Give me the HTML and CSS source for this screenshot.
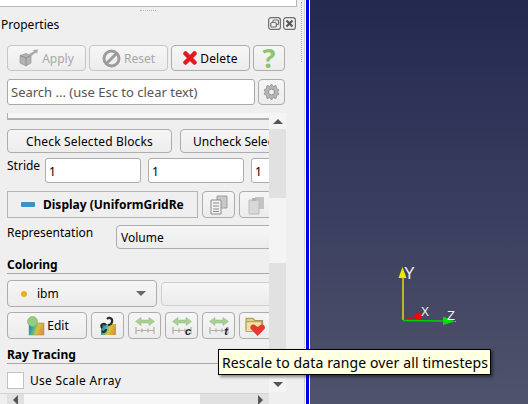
FILE: index.html
```html
<!DOCTYPE html>
<html>
    <head>
        <title>Properties</title>
        <link rel="stylesheet" href="styles.css">
    </head>
    <body>
        <svg class="defs" width="0" height="0">
            <defs>
                <linearGradient id="mapa" x1="0" y1="0" x2="1" y2="0.3">
                    <stop offset="0" stop-color="#2a5fc4"/>
                    <stop offset="0.35" stop-color="#2fb0a8"/>
                    <stop offset="0.65" stop-color="#d8c23c"/>
                    <stop offset="1" stop-color="#d9973a"/>
                </linearGradient>
                <symbol id="flecha" viewBox="0 0 20 9">
                    <path d="M.5 4.500 6 .5V3H14V.5L19.500 4.500 14 8.500V6H6V8.500Z" fill="#a8d092" stroke="#93b885" stroke-width=".5"/>
                </symbol>
                <symbol id="regla" viewBox="0 0 20 9">
                    <path d="M1 1V8M7 2.500V6.500M13 2.500V6.500M19 1V8M1 4.500H19" fill="none" stroke="#b0b0a6" stroke-width="1.200"/>
                </symbol>
            </defs>
        </svg>

        <section class="dock">
            <div class="top_panel"></div>
            <div class="grip"></div>
            <div class="grip_side"></div>

            <div class="title_row">
                <span class="title">Properties</span>
                <span class="title_icons">
                    <svg width="13" height="13" viewBox="0 0 13 13"><rect x=".6" y=".6" width="11.800" height="11.800" rx="2.500" fill="none" stroke="#6f6f6f" stroke-width="1.200"/><rect x="5" y="3" width="5.500" height="4.500" rx="1" fill="none" stroke="#6f6f6f" stroke-width="1.200"/><rect x="2.800" y="5.500" width="5.500" height="4.500" rx="1" fill="#efefef" stroke="#6f6f6f" stroke-width="1.200"/></svg>
                    <svg width="13" height="13" viewBox="0 0 13 13"><rect x=".6" y=".6" width="11.800" height="11.800" rx="2.500" fill="none" stroke="#6f6f6f" stroke-width="1.200"/><path d="M3.500 3.500 9.500 9.500M9.500 3.500 3.500 9.500" stroke="#555" stroke-width="2.200"/></svg>
                </span>
            </div>

            <div class="action_row">
                <button class="btn wide off">
                    <svg width="20" height="18" viewBox="0 0 20 18"><path d="M1 6.500 7 4.500 12 6.500V14L7 17 1 14Z" fill="#b3b3b3" stroke="#8e8e8e" stroke-width=".6"/><path d="M7 9V16.500M1 6.500 7 9 12 6.500" fill="none" stroke="#8e8e8e"/><path d="M10 5 15 2.500 14 1 19 .5 18 5 17 3.500 12 7Z" fill="#a8a8a8"/></svg>
                    Apply
                </button>
                <button class="btn wide off">
                    <svg class="reset_icon" width="19" height="19" viewBox="0 0 19 19"><circle cx="9.500" cy="9.500" r="7.500" fill="none" stroke="#9c9c9c" stroke-width="3"/><path d="M4.500 14.500 14.500 4.500" stroke="#9c9c9c" stroke-width="3"/></svg>
                    Reset
                </button>
                <button class="btn wide">
                    <svg width="14" height="14" viewBox="0 0 14 14"><path d="M2.500 2.500 11.500 11.500M11.500 2.500 2.500 11.500" stroke="#e5171f" stroke-width="4.500" stroke-linecap="round"/></svg>
                    <span class="wider">Delete</span>
                </button>
                <button class="btn help">?</button>
            </div>

            <div class="search_row">
                <div class="search">Search ... (use Esc to clear text)</div>
                <button class="btn gear">
                    <svg width="17" height="18" viewBox="0 0 17 18"><path d="M8.500 1 10 3.500 13 2.500 13.500 5.500 16 7 14.500 9 16 11 13.500 12.500 13 15.500 10 14.500 8.500 17 7 14.500 4 15.500 3.500 12.500 1 11 2.500 9 1 7 3.500 5.500 4 2.500 7 3.500Z" fill="#b5b5b5" stroke="#9a9a9a"/><circle cx="8.500" cy="9" r="3" fill="#efefef" stroke="#8f8f8f"/></svg>
                </button>
            </div>

            <div class="scroll_row">
                <div class="content">
                    <div class="cut_box"></div>

                    <div class="row check_row">
                        <button class="btn check_one wider">Check Selected Blocks</button>
                        <button class="btn check_two">Uncheck Selected Blocks</button>
                    </div>

                    <div class="row stride_row">
                        <span class="stride_label">Stride</span>
                        <div class="field">1</div>
                        <div class="field">1</div>
                        <div class="field">1</div>
                    </div>

                    <div class="row display_row">
                        <div class="display_tab"><span class="display_mark"></span><span class="display_text">Display (UniformGridRe</span></div>
                        <button class="btn small">
                            <svg width="20" height="20" viewBox="0 0 20 20"><path d="M8 1H18V13H8Z" fill="#c9c9c9" stroke="#9d9d9d"/><path d="M2 5H12V19H2Z" fill="#f3f3f3" stroke="#8c8c8c"/><path d="M4 8H10M4 11H10M4 14H10M4 16.500H10" stroke="#8c8c8c"/></svg>
                        </button>
                        <button class="btn small">
                            <svg width="20" height="20" viewBox="0 0 20 20"><path d="M9 2H18V14H9Z" fill="#c4c4c4"/><path d="M3 5H13V19H3Z" fill="#d8d8d8" stroke="#bcbcbc"/><path d="M6 3H10V6H6Z" fill="#b5b5b5"/></svg>
                        </button>
                    </div>

                    <div class="row repr_row">
                        <span class="repr_label">Representation</span>
                        <div class="combo repr_combo">Volume</div>
                    </div>

                    <h3 class="section">Coloring</h3>

                    <div class="row color_row">
                        <div class="combo ibm_combo"><span class="dot"></span><span>ibm</span><span class="caret"></span></div>
                        <div class="combo empty_combo"></div>
                    </div>

                    <div class="row tools_row">
                        <button class="btn edit">
                            <svg width="18" height="20" viewBox="0 0 18 20"><rect x="2" y="7" width="15" height="12" fill="url(#mapa)"/><rect x="2" y="7" width="15" height="12" fill="none" stroke="#8c8c6a" stroke-width=".5"/><circle cx="5.500" cy="5.500" r="5" fill="#95cd80" stroke="#86b277" stroke-width=".6"/></svg>
                            Edit
                        </button>
                        <button class="btn small">
                            <svg width="18" height="20" viewBox="0 0 18 20"><rect x="2" y="8" width="15" height="11" fill="url(#mapa)"/><path d="M3 12C1 8 5 7 7 9M8 3C10 1 14 2 13 6 12.500 8 11 9 9 9M3 15C5 17 7 15 7 13" fill="none" stroke="#2b2b2b" stroke-width="2.200"/></svg>
                        </button>
                        <button class="btn small ruler">
                            <svg width="20" height="9" viewBox="0 0 20 9"><use href="#flecha"/></svg>
                            <svg width="20" height="9" viewBox="0 0 20 9"><use href="#regla"/></svg>
                        </button>
                        <button class="btn small ruler">
                            <svg width="20" height="9" viewBox="0 0 20 9"><use href="#flecha"/></svg>
                            <svg width="20" height="9" viewBox="0 0 20 9"><use href="#regla"/></svg>
                            <i class="ruler_letter">c</i>
                        </button>
                        <button class="btn small ruler">
                            <svg width="20" height="9" viewBox="0 0 20 9"><use href="#flecha"/></svg>
                            <svg width="20" height="9" viewBox="0 0 20 9"><use href="#regla"/></svg>
                            <i class="ruler_letter">t</i>
                        </button>
                        <button class="btn small folder">
                            <svg width="22" height="22" viewBox="0 0 20 20"><path d="M1 3H7L9 5H16V13H1Z" fill="#e6cf7c" stroke="#a8955a"/><path d="M1 6H15V15H1Z" fill="#f2e2a0" stroke="#b9a566"/><path d="M11.500 19 5.500 13C3.500 10.500 6.500 7.500 9 9L11.500 11 14 9C16.500 7.500 19.500 10.500 17.500 13Z" fill="#e23b32"/></svg>
                        </button>
                    </div>

                    <h3 class="section ray">Ray Tracing</h3>

                    <div class="row scale_row">
                        <span class="checkbox"></span>
                        <span class="wider_more">Use Scale Array</span>
                    </div>
                </div>

                <div class="vscroll">
                    <div class="arrow"><span class="tri_up"></span></div>
                    <div class="vtrack_a"></div>
                    <div class="vthumb"></div>
                    <div class="vtrack_b"></div>
                    <div class="arrow"><span class="tri_down"></span></div>
                </div>
            </div>

            <div class="hscroll">
                <div class="harrow"><span class="tri_left"></span></div>
                <div class="hthumb"></div>
                <div class="htrack"></div>
                <div class="harrow"><span class="tri_right"></span></div>
            </div>
        </section>

        <div class="gap"></div>

        <section class="view">
            <svg class="axes" width="70" height="70" viewBox="395 260 70 70">
                <path d="M403 320V276" stroke="#e0e000" stroke-width="1.500"/>
                <path d="M402.500 267 406.500 278H398.500Z" fill="#e8e800"/>
                <path d="M404 320 418 316" stroke="#f00000" stroke-width="1.300"/>
                <circle cx="418" cy="316" r="3.500" fill="#ff0000"/>
                <path d="M403 320.500 445 321" stroke="#00d000" stroke-width="1.300"/>
                <path d="M443 316.500 455 321.500 443 325Z" fill="#00e000"/>
                <path d="M455 321.500H456" stroke="#aaa"/>
                <text class="axis_text" x="404" y="279" font-size="16">Y</text>
                <text class="axis_text" x="421" y="316" font-size="12">X</text>
                <text class="axis_text" x="447" y="320" font-size="13">Z</text>
            </svg>
        </section>

        <div class="tooltip">Rescale to data range over all timesteps</div>
    </body>
</html>
```

FILE: styles.css
```css
*{
    box-sizing: border-box;
}
html, body{
    margin: 0;
    height: 404px;
    overflow: hidden;
}
body{
    display: flex;
    width: 528px;
    font-family: "Noto Sans", sans-serif;
    font-size: 12px;
    color: #000;
    background: #efefef;
}
.defs{
    position: absolute;
}
.dock{
    position: relative;
    width: 304px;
    height: 404px;
    flex-shrink: 0;
    background: #efefef;
}
.gap{
    width: 2px;
    background: #fff;
    border-left: 1px solid #d0d0d0;
}
.view{
    flex: 1;
    position: relative;
    border-left: 3px solid #0000f0;
    box-shadow: inset 1px 0 0 #fff;
    background: linear-gradient(#232850, #4f536c);
}
.axes{
    position: absolute;
    left: 86px;
    top: 260px;
}
.axis_text{
    font-family: "Liberation Sans", sans-serif;
    fill: #f0f0f0;
}
.top_panel{
    height: 7px;
    width: 297px;
    background: #fff;
    border-right: 1px solid #b5b5b5;
    border-bottom: 1px solid #b5b5b5;
}
.grip{
    width: 16px;
    height: 1px;
    margin: 3px 0 0 140px;
    border-top: 1px dotted #b8b8b8;
}
.grip_side{
    position: absolute;
    left: 301px;
    top: 2px;
    width: 1px;
    height: 60px;
    border-left: 1px dotted #b0b0b0;
}
.title_row{
    display: flex;
    justify-content: space-between;
    align-items: flex-start;
    width: 296px;
    height: 20px;
    margin-top: 4px;
    padding-left: 1px;
    line-height: 19px;
}
.title_icons{
    display: flex;
    gap: 2px;
    margin-top: 2px;
}
.title_icons svg{
    display: block;
}
.btn{
    display: flex;
    align-items: center;
    justify-content: center;
    gap: 3px;
    padding: 0;
    flex-shrink: 0;
    font: inherit;
    color: #000;
    border: 1px solid #adadad;
    border-radius: 4px;
    background: linear-gradient(#f6f6f6, #ececec);
}
.wider{
    letter-spacing: 0.15px;
}
.wider_more{
    letter-spacing: 0.3px;
}
.action_row{
    display: flex;
    gap: 3px;
    height: 26px;
    margin: 10px 0 0 7px;
}
.wide{
    width: 79px;
}
.off{
    color: #a8a8a8;
    border-color: #c6c6c6;
}
.help{
    width: 32px;
    font-size: 27px;
    font-weight: bold;
    line-height: 24px;
    color: #8fc46e;
}
.search_row{
    display: flex;
    gap: 3px;
    height: 26px;
    margin: 8px 0 0 7px;
}
.search{
    width: 248px;
    padding: 3px 0 0 3px;
    font-size: 13px;
    color: #555;
    background: #fff;
    border: 1px solid #a9a9a9;
    border-radius: 3px;
}
.gear{
    width: 27px;
}
.scroll_row{
    display: flex;
    width: 286px;
    height: 279px;
    margin-top: 8px;
}
.content{
    width: 269px;
    flex-shrink: 0;
    overflow: hidden;
    padding-left: 7px;
}
.row{
    display: flex;
    width: 262px;
}
.cut_box{
    height: 7px;
    margin-bottom: 9px;
    background: #f7f7f7;
    border-left: 1px solid #b0b0b0;
    border-bottom: 2px solid #b0b0b0;
}
.check_row{
    gap: 8px;
    height: 24px;
    margin-bottom: 5px;
}
.check_one{
    width: 165px;
}
.check_two{
    width: 165px;
    justify-content: flex-start;
    padding-left: 12px;
}
.stride_row{
    height: 25px;
    margin-bottom: 8px;
    gap: 7px;
}
.stride_label{
    width: 31px;
    flex-shrink: 0;
    line-height: 16px;
}
.field{
    width: 96px;
    flex-shrink: 0;
    padding: 4px 0 0 3px;
    background: #fff;
    border: 1px solid #adadad;
    border-radius: 3px;
}
.display_row{
    gap: 4px;
    height: 27px;
    margin-bottom: 7px;
}
.display_tab{
    display: flex;
    align-items: center;
    width: 191px;
    flex-shrink: 0;
    padding-left: 13px;
    overflow: hidden;
    white-space: nowrap;
    font-weight: bold;
    border: 1px solid #b5b5b5;
}
.display_mark{
    width: 14px;
    height: 5px;
    margin-right: 8px;
    flex-shrink: 0;
    border-radius: 1px;
    background: #3a94c8;
}
.small{
    width: 33px;
}
.repr_row{
    height: 24px;
    margin-bottom: 8px;
}
.repr_label{
    width: 109px;
    flex-shrink: 0;
    line-height: 16px;
}
.combo{
    display: flex;
    align-items: center;
    flex-shrink: 0;
    border: 1px solid #adadad;
    border-radius: 4px;
    background: linear-gradient(#f6f6f6, #ececec);
}
.repr_combo{
    width: 170px;
    padding-left: 4px;
}
.section{
    height: 17px;
    margin: 0 0 6px 0;
    font-size: 12px;
    font-weight: bold;
    line-height: 16px;
    border-bottom: 1px solid #a8a8a8;
}
.color_row{
    gap: 4px;
    height: 27px;
    margin-bottom: 5px;
    align-items: center;
}
.ibm_combo{
    width: 150px;
    height: 27px;
    padding-left: 13px;
}
.dot{
    width: 6px;
    height: 6px;
    margin-right: 10px;
    border-radius: 50%;
    background: #e8b020;
}
.caret{
    margin-left: auto;
    margin-right: 10px;
    border-left: 5px solid transparent;
    border-right: 5px solid transparent;
    border-top: 5px solid #666;
}
.empty_combo{
    width: 120px;
    height: 24px;
    border-color: #cfcfcf;
}
.tools_row{
    gap: 4px;
    height: 27px;
    margin-bottom: 8px;
}
.edit{
    width: 80px;
    gap: 2px;
    padding-left: 2px;
}
.ruler{
    position: relative;
    flex-direction: column;
    gap: 0;
}
.ruler_letter{
    position: absolute;
    right: 6px;
    bottom: 2px;
    font: italic bold 11px "Liberation Sans", sans-serif;
    line-height: 10px;
    color: #222;
}
.folder{
    justify-content: flex-start;
    padding-left: 5px;
}
.ray{
    margin-bottom: 8px;
}
.scale_row{
    align-items: center;
    gap: 6px;
    height: 17px;
}
.checkbox{
    width: 17px;
    height: 17px;
    background: #fff;
    border: 1px solid #c2c2c2;
}
.vscroll{
    width: 17px;
    display: flex;
    flex-direction: column;
}
.arrow{
    display: flex;
    align-items: center;
    justify-content: center;
    height: 16px;
    background: #f4f4f4;
}
.vtrack_a{
    height: 69px;
    background: #e1e1e1;
}
.vthumb{
    height: 65px;
    background: #f4f4f4;
}
.vtrack_b{
    flex: 1;
    background: #e1e1e1;
}
.tri_up{
    border-left: 5px solid transparent;
    border-right: 5px solid transparent;
    border-bottom: 5px solid #555;
}
.tri_down{
    border-left: 5px solid transparent;
    border-right: 5px solid transparent;
    border-top: 5px solid #555;
}
.tri_left{
    border-top: 5px solid transparent;
    border-bottom: 5px solid transparent;
    border-right: 5px solid #555;
}
.tri_right{
    border-top: 5px solid transparent;
    border-bottom: 5px solid transparent;
    border-left: 5px solid #555;
}
.hscroll{
    display: flex;
    width: 269px;
    height: 13px;
    margin-top: 1px;
    padding-left: 7px;
    background: #e1e1e1;
    background-clip: content-box;
    border-top: 1px solid #d4d4d4;
}
.harrow{
    display: flex;
    align-items: center;
    justify-content: center;
    width: 17px;
}
.hthumb{
    width: 176px;
    background: #f6f6f6;
}
.htrack{
    flex: 1;
}
.tooltip{
    position: absolute;
    left: 218px;
    top: 349px;
    width: 273px;
    height: 26px;
    padding: 3px 0 0 3px;
    white-space: nowrap;
    font-size: 14px;
    line-height: 19px;
    letter-spacing: 0.12px;
    background: #ffffe1;
    border: 1px solid #000;
    box-shadow: 2px 2px 3px rgba(0, 0, 0, 0.45);
}
```
